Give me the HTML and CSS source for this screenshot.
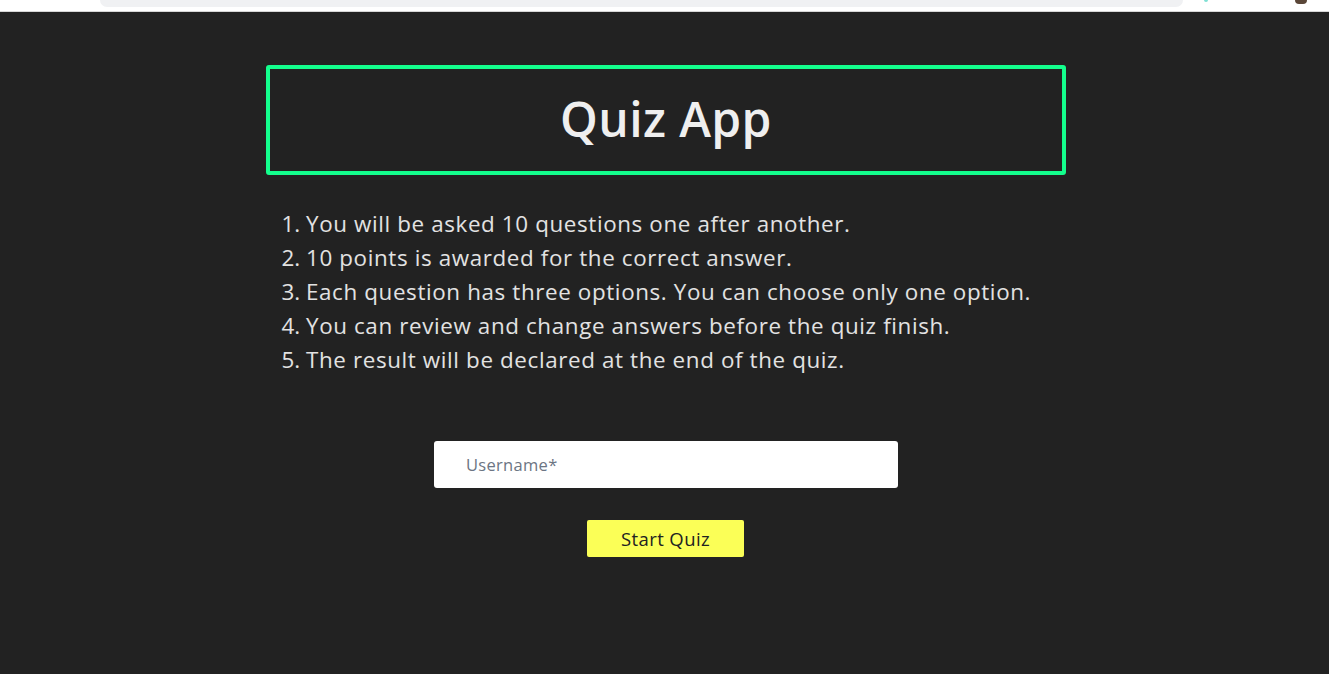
FILE: index.html
```html
<!DOCTYPE html>
<html lang="en">
<head>
<meta charset="utf-8">
<title>Quiz App</title>
<link rel="stylesheet" href="styles.css">
</head>
<body>
<div class="chrome">
  <div class="chrome-bar"></div>
  <div class="chrome-right">
    <span class="chrome-dot"></span>
    <span class="chrome-avatar"></span>
  </div>
</div>
<main class="page">
  <div class="wrap">
    <header class="title-box">
      <h1 class="title">Quiz App</h1>
    </header>
    <ol class="rules">
      <li>You will be asked 10 questions one after another.</li>
      <li>10 points is awarded for the correct answer.</li>
      <li>Each question has three options. You can choose only one option.</li>
      <li>You can review and change answers before the quiz finish.</li>
      <li>The result will be declared at the end of the quiz.</li>
    </ol>
    <form class="start-form" onsubmit="return false;">
      <input class="username" type="text" placeholder="Username*">
      <button class="start-btn" type="submit">Start Quiz</button>
    </form>
  </div>
</main>
</body>
</html>
```

FILE: styles.css
```css
* { box-sizing: border-box; }
html, body { margin: 0; padding: 0; height: 100%; }
body {
  background: #222222;
  font-family: "Open Sans", "DejaVu Sans", sans-serif;
  overflow: hidden;
}
.chrome {
  height: 12px;
  background: #ffffff;
  border-bottom: 1px solid #d6d6d6;
  display: flex;
  align-items: flex-start;
  padding-left: 100px;
}
.chrome-bar {
  width: 1083px;
  height: 7px;
  background: #f0f1f3;
  border-radius: 0 0 10px 10px;
}
.chrome-right {
  flex: 1;
  display: flex;
  justify-content: space-between;
  padding: 0 22px 0 21px;
}
.chrome-dot {
  width: 4px;
  height: 2px;
  background: #7fe0d4;
  border-radius: 0 0 2px 2px;
}
.chrome-avatar {
  width: 12px;
  height: 4px;
  background: #5a4638;
  border-radius: 0 0 6px 6px;
}
.page {
  display: flex;
  justify-content: center;
  padding-left: 3px;
}
.wrap {
  width: 800px;
  padding-top: 53px;
  display: flex;
  flex-direction: column;
  align-items: center;
}
.title-box {
  width: 800px;
  height: 110px;
  border: 4px solid #13ff8d;
  border-radius: 3px;
  display: flex;
  align-items: center;
  justify-content: center;
}
.title {
  margin: 0;
  color: #efefef;
  font-size: 48px;
  font-weight: 600;
  letter-spacing: 0.4px;
  line-height: 1;
  padding-bottom: 2px;
}
.rules {
  align-self: stretch;
  margin: 32px 0 0;
  padding-left: 40px;
  color: #e2e2e2;
  font-size: 22.4px;
  line-height: 34px;
  letter-spacing: 0.62px;
}
.rules li { padding-left: 0; }
.rules li::marker { letter-spacing: 0; }
.start-form {
  margin-top: 64px;
  display: flex;
  flex-direction: column;
  align-items: center;
}
.username {
  width: 464px;
  height: 47px;
  border: none;
  border-radius: 3px;
  background: #ffffff;
  padding: 0 0 0 32px;
  font-family: "Open Sans", sans-serif;
  font-size: 16.5px;
  color: #333;
  outline: none;
}
.username::placeholder {
  color: #6c7583;
  letter-spacing: 0.3px;
}
.start-btn {
  margin-top: 32px;
  margin-right: 1px;
  width: 157px;
  height: 37px;
  border: none;
  border-radius: 2px;
  background: #fbff57;
  color: #222222;
  font-family: "Open Sans", sans-serif;
  font-size: 18.5px;
  letter-spacing: 0.4px;
  padding: 0;
  cursor: pointer;
}
```
